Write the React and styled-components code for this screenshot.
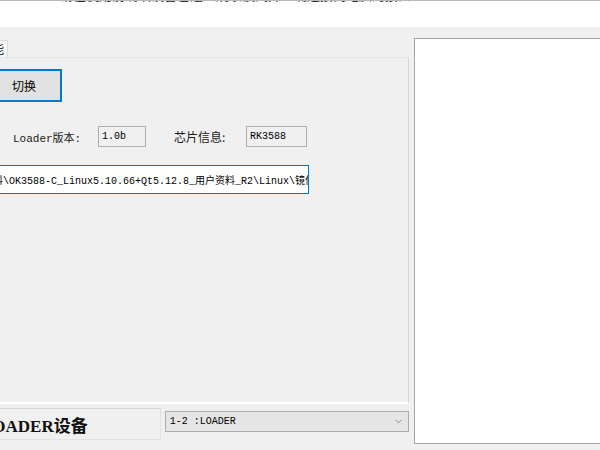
import React from 'react'
import styled, { createGlobalStyle } from 'styled-components'
import { ChevronDown } from 'lucide-react'

const GlobalStyle = createGlobalStyle`
  html, body {
    margin: 0;
    padding: 0;
  }
  body {
    width: 600px;
    height: 450px;
    overflow: hidden;
    background: #f0f0f0;
    font-family: 'Noto Sans CJK SC', 'Liberation Sans', sans-serif;
    font-size: 12px;
    color: #000;
  }
`

// Window frame
const Window = styled.div`
  width: 600px;
  height: 450px;
  display: flex;
  flex-direction: column;
  overflow: hidden;
`
const HintStrip = styled.div`
  height: 27px;
  flex-shrink: 0;
  box-sizing: border-box;
  background: #fff;
  border-top: 1px solid #b9b9b9;
  overflow: hidden;
`
const HintText = styled.div`
  margin: -15px 0 0 60px;
  white-space: nowrap;
  font-size: 13px;
  line-height: 17px;
  color: #2a2a2a;
`
const Main = styled.div`
  display: flex;
  gap: 5px;
  padding-top: 11px;
  margin-left: -14px;
`

// Left: tab control + status row
const LeftColumn = styled.div`
  width: 423px;
  flex-shrink: 0;
  display: flex;
  flex-direction: column;
  padding-top: 2px;
`
const TabStrip = styled.div`
  display: flex;
  height: 17px;
`
const Tab = styled.div`
  width: 56px;
  margin-left: -34px;
  box-sizing: border-box;
  border: 1px solid #dadada;
  border-bottom: none;
  background: #f7f7f7;
  line-height: 16px;
  text-align: center;
`
const TabPanel = styled.div`
  height: 347px;
  box-sizing: border-box;
  border-top: 1px solid #e6e6e6;
  border-right: 1px solid #d6d6d6;
  border-bottom: 2px solid #fff;
  padding-top: 11px;
  display: flex;
  flex-direction: column;
`
const SwitchButton = styled.button`
  width: 76px;
  height: 33px;
  box-sizing: border-box;
  border: 2px solid #0078d7;
  background: #e1e1e1;
  font-family: 'Noto Sans CJK SC', sans-serif;
  font-size: 12px;
  color: #000;
  padding: 0;
`
const InfoRow = styled.div`
  display: flex;
  align-items: center;
  height: 21px;
  margin-top: 24px;
  padding-left: 27px;
`
const FieldLabel = styled.span`
  width: ${(p) => p.$width}px;
  margin-left: ${(p) => p.$offset || 0}px;
  font-family: ${(p) => (p.$mono ? "'Liberation Mono', 'Noto Sans CJK SC', monospace" : "'Noto Sans CJK SC', sans-serif")};
  font-size: ${(p) => (p.$mono ? 11 : 12)}px;
  color: #1a1a1a;
  white-space: nowrap;
`
const ReadOnlyBox = styled.div`
  width: ${(p) => p.$width}px;
  height: 21px;
  box-sizing: border-box;
  border: 1px solid #adadad;
  padding-left: 3px;
  display: flex;
  align-items: center;
  font-family: 'Liberation Mono', monospace;
  font-size: 10px;
`
const PathBox = styled.div`
  width: 323px;
  height: 29px;
  margin-top: 18px;
  box-sizing: border-box;
  border: 1px solid #0078d7;
  background: #fff;
  display: flex;
  align-items: center;
  justify-content: flex-end;
  overflow: hidden;
  font-family: 'Liberation Mono', 'Noto Sans CJK SC', monospace;
  font-size: 10px;
  white-space: nowrap;
`
const PathText = styled.span`
  margin-right: -7px;
`
const StatusRow = styled.div`
  display: flex;
  align-items: flex-start;
  gap: 4px;
  margin-top: 4px;
`
const StatusBox = styled.div`
  width: 175px;
  height: 32px;
  box-sizing: border-box;
  border: 1px solid #e2e2e2;
  border-top-color: #d4d4d4;
  display: flex;
  align-items: center;
  justify-content: flex-end;
  padding-right: 72px;
  overflow: hidden;
  white-space: nowrap;
  font-family: 'Liberation Serif', 'Noto Sans CJK SC', serif;
  font-size: 17px;
  font-weight: 700;
  color: #111;
`
const DeviceSelect = styled.div`
  width: 245px;
  height: 21px;
  margin-top: 3px;
  box-sizing: border-box;
  border: 1px solid #adadad;
  background: #e5e5e5;
  display: flex;
  align-items: center;
  justify-content: space-between;
  padding: 0 4px 0 4px;
  font-family: 'Liberation Mono', monospace;
  font-size: 10px;
  color: #000;
`

// Right: log area
const LogPanel = styled.div`
  width: 200px;
  height: 406px;
  flex-shrink: 0;
  box-sizing: border-box;
  border: 1px solid #a5a5a5;
  background: #fff;
`

const App = () => (
  <>
    <GlobalStyle />
    <Window>
      <HintStrip>
        <HintText>请在使用前确认设备已进入烧录模式并正确连接到电脑的接口</HintText>
      </HintStrip>
      <Main>
        <LeftColumn>
          <TabStrip>
            <Tab>高级功能</Tab>
          </TabStrip>
          <TabPanel>
            <SwitchButton>切换</SwitchButton>
            <InfoRow>
              <FieldLabel $width={85} $mono>Loader版本:</FieldLabel>
              <ReadOnlyBox $width={48}>1.0b</ReadOnlyBox>
              <FieldLabel $width={72} $offset={28}>芯片信息:</FieldLabel>
              <ReadOnlyBox $width={61}>RK3588</ReadOnlyBox>
            </InfoRow>
            <PathBox>
              <PathText>D:\资料\OK3588-C_Linux5.10.66+Qt5.12.8_用户资料_R2\Linux\镜像</PathText>
            </PathBox>
          </TabPanel>
          <StatusRow>
            <StatusBox>发现一个LOADER设备</StatusBox>
            <DeviceSelect>
              <span>1-2 :LOADER</span>
              <ChevronDown size={11} color='#666' strokeWidth={1.5} />
            </DeviceSelect>
          </StatusRow>
        </LeftColumn>
        <LogPanel />
      </Main>
    </Window>
  </>
)

export default App
